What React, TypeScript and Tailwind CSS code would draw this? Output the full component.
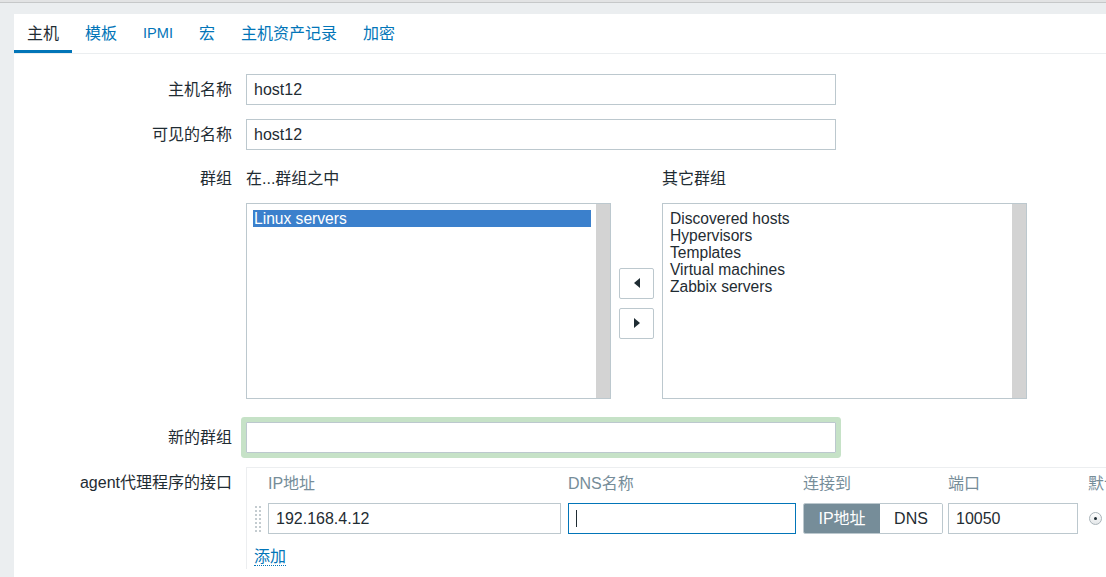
import React from 'react'

const font = { fontFamily: '"Liberation Sans", "Noto Sans CJK SC", sans-serif' }

const tabs = ['主机', '模板', 'IPMI', '宏', '主机资产记录', '加密']
const otherGroups = ['Discovered hosts', 'Hypervisors', 'Templates', 'Virtual machines', 'Zabbix servers']

function Label({ children, className = '' }: { children: React.ReactNode; className?: string }) {
    return (
        <div className={`w-[218px] shrink-0 text-right text-[16px] text-[#1f2c33] ${className}`}>
            {children}
        </div>
    )
}

function TextInput({ value, className = '' }: { value: string; className?: string }) {
    return (
        <div className={`h-[31px] border border-[#bcc8ce] bg-white px-[7px] flex items-center text-[16px] text-[#1f2c33] ${className}`}>
            {value}
        </div>
    )
}

function Triangle({ dir }: { dir: 'left' | 'right' }) {
    return (
        <svg width="8" height="10" viewBox="0 0 8 10">
            {dir === 'left' ? <path d="M7 0 L7 10 L1 5 Z" fill="#1f2c33" /> : <path d="M1 0 L1 10 L7 5 Z" fill="#1f2c33" />}
        </svg>
    )
}

function ListBox({ items, selected }: { items: string[]; selected?: string }) {
    return (
        <div className="w-[365px] h-[196px] border border-[#bcc8ce] bg-white flex">
            <div className="flex-1 pt-[6px] pl-[6px] pr-[5px]">
                {items.map(item => (
                    <div
                        key={item}
                        className={`h-[17px] leading-[17px] text-[15.6px] pl-[1px] ${item === selected ? 'bg-[#3b80cc] text-white' : 'text-[#1f2c33]'}`}
                    >
                        {item}
                    </div>
                ))}
            </div>
            <div className="w-[14px] bg-[#d3d3d3]" />
        </div>
    )
}

export default function App() {
    return (
        <div className="h-[577px] w-[1106px] overflow-hidden bg-[#ebeef0]" style={font}>
            <div className="h-[3px] bg-[#e2e3e4] border-b border-[#c6c8c9]" />
            <div className="ml-[14px] mt-[11px] w-[1120px] bg-white pb-[40px]">
                {/* tabs */}
                <div className="flex h-[40px] border-b border-[#ebeef0]">
                    {tabs.map((t, i) => (
                        <div
                            key={t}
                            className={`px-[13px] flex items-center ${t === 'IPMI' ? 'text-[14.6px]' : 'text-[16px]'} ${i === 0 ? 'text-[#1f2c33] border-b-[3px] border-[#0275b8] pt-[3px]' : 'text-[#0275b8]'}`}
                        >
                            {t}
                        </div>
                    ))}
                </div>

                {/* host name */}
                <div className="mt-[20px] flex items-center">
                    <Label>主机名称</Label>
                    <TextInput value="host12" className="ml-[14px] w-[590px]" />
                </div>
                <div className="mt-[14px] flex items-center">
                    <Label>可见的名称</Label>
                    <TextInput value="host12" className="ml-[14px] w-[590px]" />
                </div>

                {/* groups */}
                <div className="mt-[19px] flex">
                    <Label className="leading-[20px]">群组</Label>
                    <div className="ml-[14px]">
                        <div className="flex text-[16px] leading-[20px] text-[#1f2c33]">
                            <div className="w-[416px]">在...群组之中</div>
                            <div>其它群组</div>
                        </div>
                        <div className="mt-[14px] flex">
                            <ListBox items={['Linux servers']} selected="Linux servers" />
                            <div className="w-[51px] flex flex-col items-center justify-center gap-[9px] pt-[4px]">
                                <div className="w-[35px] h-[31px] border border-[#bcc8ce] rounded-[2px] bg-white flex items-center justify-center">
                                    <Triangle dir="left" />
                                </div>
                                <div className="w-[35px] h-[31px] border border-[#bcc8ce] rounded-[2px] bg-white flex items-center justify-center">
                                    <Triangle dir="right" />
                                </div>
                            </div>
                            <ListBox items={otherGroups} />
                        </div>
                    </div>
                </div>

                {/* new group */}
                <div className="mt-[23px] flex items-center">
                    <Label>新的群组</Label>
                    <div className="ml-[14px] w-[590px] h-[31px] border border-[#bcc8ce] bg-white rounded-[1px] shadow-[0_0_0_5px_#c6e2c7]" />
                </div>

                {/* agent interfaces */}
                <div className="mt-[14px] flex">
                    <Label className="pt-[6px] leading-[20px]">agent代理程序的接口</Label>
                    <div className="ml-[14px] flex-1 border-t border-l border-[#eceef0] pl-[6px] pt-[6px]">
                        <div className="flex text-[16px] leading-[20px] text-[#768d99] whitespace-nowrap">
                            <div className="w-[15px]" />
                            <div className="w-[300px]">IP地址</div>
                            <div className="w-[235px]">DNS名称</div>
                            <div className="w-[145px]">连接到</div>
                            <div className="w-[140px]">端口</div>
                            <div>默认</div>
                        </div>
                        <div className="mt-[9px] flex items-center">
                            <div className="w-[15px] flex justify-start pl-[1px]">
                                <svg width="9" height="28" viewBox="0 0 9 28">
                                    {[0, 1, 2, 3, 4, 5, 6].map(r =>
                                        [0, 1].map(c => (
                                            <rect key={`${r}-${c}`} x={1 + c * 4} y={1 + r * 4} width="2" height="2" fill="#c4ccd0" />
                                        )),
                                    )}
                                </svg>
                            </div>
                            <TextInput value="192.168.4.12" className="w-[293px]" />
                            <div className="ml-[7px] w-[228px] h-[31px] border border-[#0275b8] bg-white flex items-center pl-[7px]">
                                <div className="w-[1px] h-[17px] bg-[#1f2c33]" />
                            </div>
                            <div className="ml-[7px] w-[140px] h-[31px] flex rounded-[2px] overflow-hidden border border-[#bcc8ce] text-[16px]">
                                <div className="w-[76px] bg-[#768d99] text-white flex items-center justify-center">IP地址</div>
                                <div className="flex-1 bg-white text-[#1f2c33] flex items-center justify-center">DNS</div>
                            </div>
                            <TextInput value="10050" className="ml-[5px] w-[130px]" />
                            <div className="ml-[11px] w-[13px] h-[13px] rounded-full border border-[#aab4b9] bg-gradient-to-b from-white to-[#e4e7e9] flex items-center justify-center">
                                <div className="w-[3px] h-[3px] rounded-full bg-[#1f2c33]" />
                            </div>
                        </div>
                        <div className="mt-[11px] pl-[1px]">
                            <span className="text-[16px] text-[#0275b8] border-b border-dotted border-[#0275b8] leading-[19px]">添加</span>
                        </div>
                    </div>
                </div>
            </div>
        </div>
    )
}
